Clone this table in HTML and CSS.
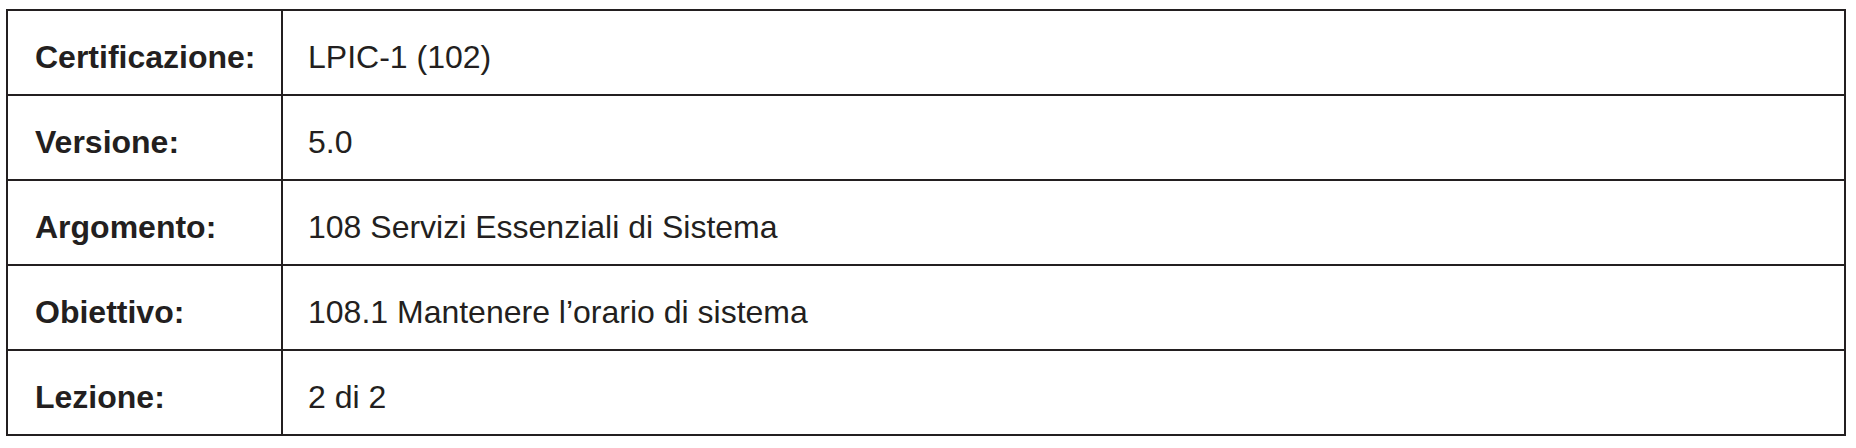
FILE: index.html
```html
<!DOCTYPE html>
<html lang="it">
<head>
<meta charset="utf-8">
<title>LPIC-1 102</title>
<link rel="stylesheet" href="styles.css">
</head>
<body>
<div class="sheet">
  <div class="label">Certificazione:</div><div class="value">LPIC-1 (102)</div>
  <div class="label">Versione:</div><div class="value">5.0</div>
  <div class="label">Argomento:</div><div class="value">108 Servizi Essenziali di Sistema</div>
  <div class="label">Obiettivo:</div><div class="value">108.1 Mantenere l’orario di sistema</div>
  <div class="label">Lezione:</div><div class="value">2 di 2</div>
</div>
</body>
</html>
```
FILE: styles.css
```css
html, body {
  margin: 0;
  padding: 0;
  background: #ffffff;
}
body {
  font-family: "Liberation Sans", Arial, sans-serif;
  color: #231f20;
  font-size: 32px;
}
.sheet {
  margin: 9px 0 0 6px;
  width: 1840px;
  box-sizing: border-box;
  border: 2px solid #231f20;
  border-bottom: none;
  display: grid;
  grid-template-columns: 275px 1fr;
  grid-auto-rows: 85px;
}
.label, .value {
  box-sizing: border-box;
  border-bottom: 2px solid #231f20;
  display: flex;
  align-items: center;
  line-height: 1;
  padding-top: 9px;
}
.label {
  font-weight: bold;
  padding-left: 27px;
  border-right: 2px solid #231f20;
}
.value {
  padding-left: 25px;
}
```
